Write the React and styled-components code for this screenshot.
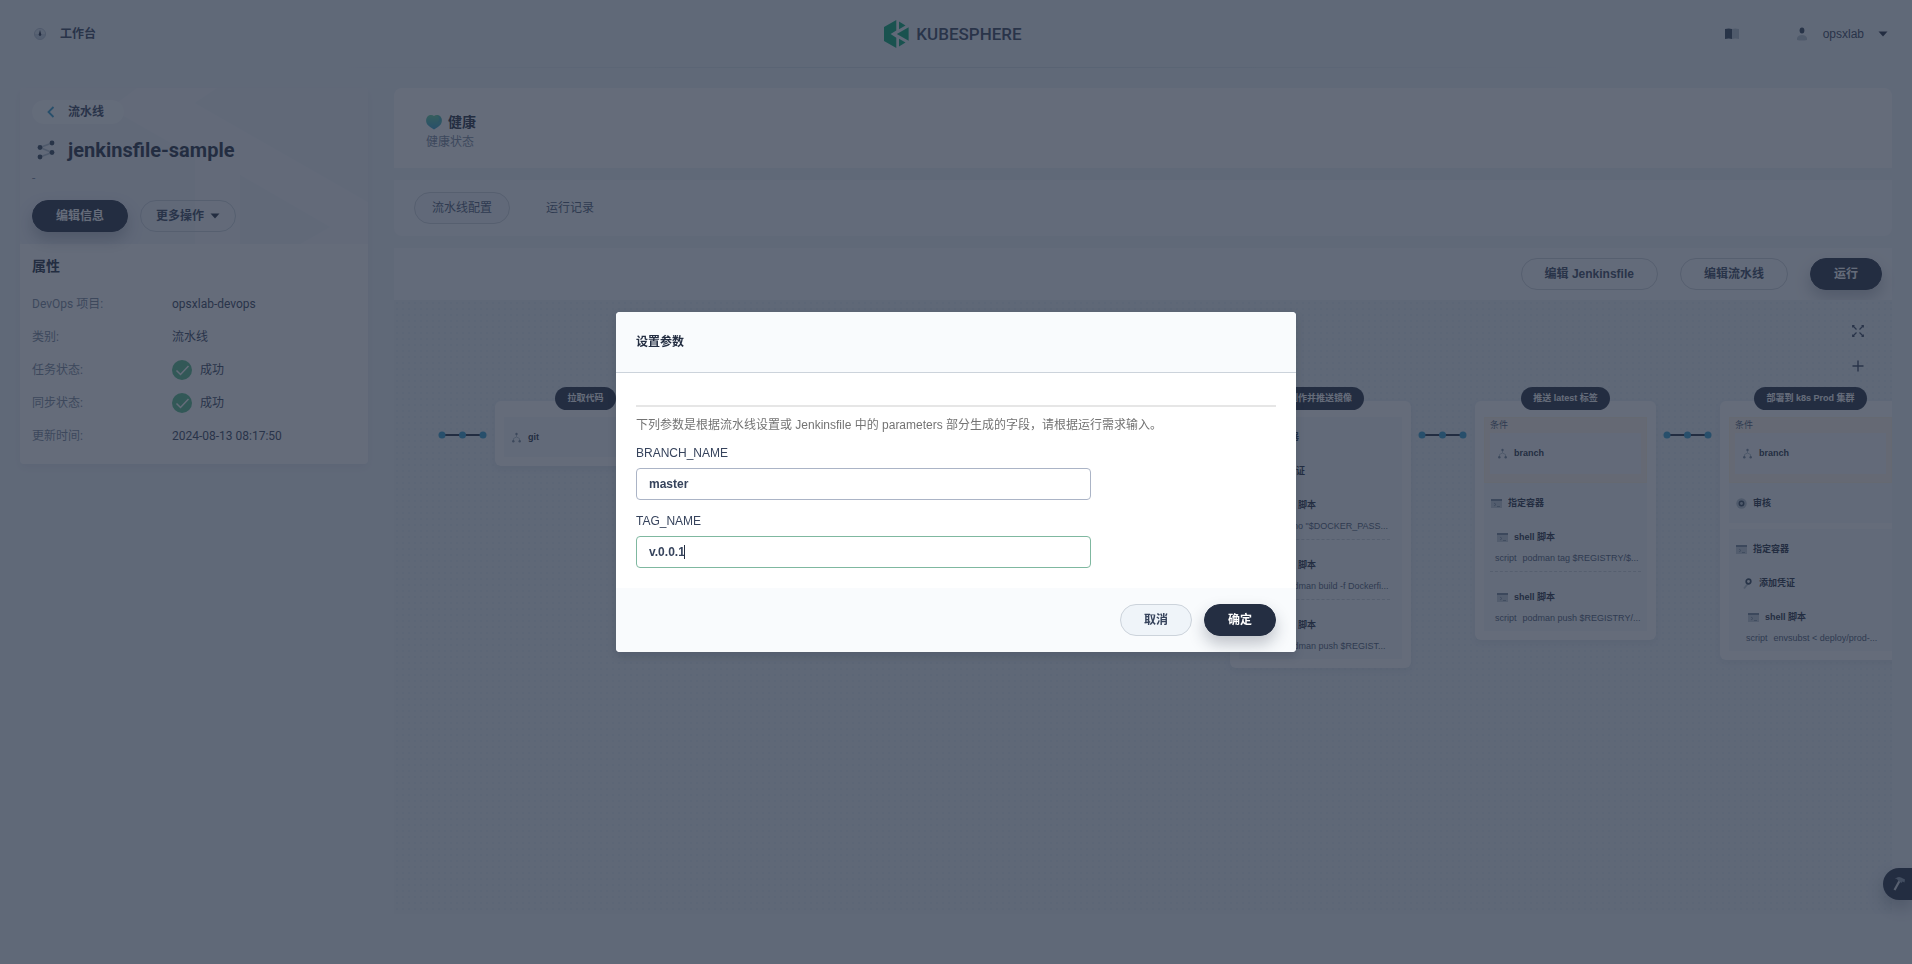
import React, { useState } from "react";
import styled, { createGlobalStyle, css } from "styled-components";

const GlobalStyle = createGlobalStyle`
  * {
    box-sizing: border-box;
  }
  body {
    margin: 0;
    background: #eff4f9;
    color: #36435c;
    font-family: "Liberation Sans", "Noto Sans CJK SC", sans-serif;
    font-size: 12px;
    line-height: 20px;
  }
  button, input {
    font-family: inherit;
    font-size: 12px;
  }
  h1, h2, h3, p, dl, dd, ul {
    margin: 0;
    padding: 0;
  }
`;

const Page = styled.div`
  min-height: 100vh;
  overflow: hidden;
`;

/* header */

const Header = styled.header`
  display: grid;
  grid-template-columns: 1fr auto 1fr;
  align-items: center;
  height: 68px;
  padding: 0 20px;
  border-bottom: 1px solid;
  border-image: linear-gradient(to right, transparent 16%, #d5e2e8 45%, #d5e2e8 55%, transparent 84%) 1;
`;

const HeaderButton = styled.button`
  display: flex;
  align-items: center;
  gap: 12px;
  padding: 0 12px;
  border: 0;
  background: none;
  color: #36435c;
  font-weight: ${(props) => (props.$strong ? 700 : 400)};
  line-height: 20px;
`;

const HeaderRight = styled.div`
  display: flex;
  justify-content: flex-end;
  align-items: center;
  gap: 39px;
`;

const UserButton = styled(HeaderButton)`
  gap: 14px;
  padding: 0 4px;
`;

const Brand = styled.a`
  display: flex;
  align-items: center;
  gap: 7px;
  padding-right: 6px;
  color: #36435c;
  font-family: Roboto, sans-serif;
  font-size: 17px;
  font-weight: 500;
  text-decoration: none;
`;

/* page frame */

const Content = styled.div`
  display: flex;
  align-items: flex-start;
  gap: 26px;
  padding: 20px 20px 0;
`;

const Aside = styled.aside`
  flex: 0 0 348px;
  border-radius: 4px;
  overflow: hidden;
  background: #fff;
  font-family: Roboto, "Noto Sans CJK SC", sans-serif;
  box-shadow: 0 4px 8px rgba(36, 46, 66, 0.06);
`;

const Main = styled.main`
  flex: 1;
  min-width: 0;
`;

const Intro = styled.div`
  position: relative;
  padding: 12px 12px 12px;
  background: #f7f9fb;
`;

const IntroArt = styled.svg`
  position: absolute;
  inset: 0;
  width: 100%;
  height: 100%;
`;

const IntroBody = styled.div`
  position: relative;
`;

const BackLink = styled.a`
  display: inline-flex;
  align-items: center;
  gap: 12px;
  height: 24px;
  padding: 0 20px 0 14px;
  border-radius: 12px;
  background: #fcfdfd;
  color: #36435c;
  font-weight: 700;
  text-decoration: none;
`;

const Title = styled.h1`
  display: flex;
  align-items: center;
  gap: 12px;
  margin-top: 12px;
  padding-left: 4px;
  color: #242e42;
  font-size: 20px;
  font-weight: 700;
  line-height: 28px;
`;

const Description = styled.p`
  margin-top: 4px;
  color: #79879c;
`;

const Actions = styled.div`
  display: flex;
  justify-content: ${(props) => (props.$end ? "flex-end" : "flex-start")};
  gap: ${(props) => props.$gap || 12}px;
`;

const IntroActions = styled(Actions)`
  margin-top: 12px;
`;

const Button = styled.button`
  display: inline-flex;
  align-items: center;
  justify-content: center;
  gap: 6px;
  height: 32px;
  padding: 0 ${(props) => (props.$menu ? 15 : 23)}px;
  border: 1px solid #ccd3db;
  border-radius: 16px;
  background: ${(props) => (props.$ghost ? "transparent" : "#eff4f9")};
  color: #36435c;
  font-weight: 700;
  line-height: 20px;
  white-space: nowrap;
  ${(props) =>
    props.$primary &&
    css`
      border-color: #242e42;
      background: #242e42;
      color: #fff;
      box-shadow: 0 8px 16px rgba(36, 46, 66, 0.28);
    `}
`;

const Attributes = styled.section`
  padding: 12px 12px 18px;
`;

const AttributesTitle = styled.h2`
  margin-bottom: 18px;
  color: #242e42;
  font-size: 14px;
  line-height: 20px;
`;

const AttributeList = styled.dl`
  display: grid;
  grid-template-columns: 140px 1fr;
  row-gap: 13px;
  line-height: 20px;

  dt {
    color: #79879c;
  }
  dd {
    display: flex;
    gap: 8px;
  }
`;

/* right column */

const StatusCard = styled.section`
  height: 80px;
  padding: 24px 32px 16px;
  border-radius: 8px 8px 0 0;
  background: #fff;
  color: #79879c;
`;

const StatusTitle = styled.h2`
  display: flex;
  align-items: center;
  gap: 6px;
  color: #242e42;
  font-size: 14px;
  line-height: 20px;
`;

const Tabs = styled.nav`
  display: flex;
  gap: 18px;
  margin-top: 12px;
  padding: 12px 20px;
  border-radius: 0 0 8px 8px;
  background: #f9fbfd;
`;

const Tab = styled.button`
  height: 32px;
  padding: 0 17px;
  border: 1px solid ${(props) => (props.$active ? "#ccd3db" : "transparent")};
  border-radius: 16px;
  background: ${(props) => (props.$active ? "#f2f6fa" : "transparent")};
  color: #4a5974;
  line-height: 20px;
`;

const Toolbar = styled(Actions)`
  margin-top: 12px;
  padding: 10px;
  background: #f9fbfd;
`;

const Canvas = styled.section`
  position: relative;
  min-height: calc(100vh - 350px);
  overflow: hidden;
  background-color: #e9f0f5;
  background-image: radial-gradient(#e2ebf1 1px, transparent 1px);
  background-size: 6px 6px;
`;

const CanvasTools = styled.div`
  position: absolute;
  top: 21px;
  right: 24px;
  display: grid;
  gap: 15px;
`;

const ToolButton = styled.button`
  display: grid;
  place-items: center;
  width: 20px;
  height: 20px;
  padding: 0;
  border: 0;
  background: none;
  color: #36435c;
`;

/* pipeline */

const Pipeline = styled.div`
  display: flex;
  align-items: flex-start;
  padding: 87px 0 0 37px;
`;

const Connector = styled.svg`
  flex: none;
  width: 64px;
  height: 8px;
  margin-top: 44px;
`;

const Stage = styled.div`
  display: flex;
  flex: none;
  flex-direction: column;
  align-items: center;
  width: 181px;
  font-size: 9px;
  line-height: 8px;
`;

const StageName = styled.h3`
  z-index: 1;
  height: 23px;
  margin-bottom: -9px;
  padding: 0 12px;
  border-radius: 12px;
  background: #242e42;
  color: #fff;
  font-size: 9px;
  line-height: 23px;
`;

const StageCard = styled.div`
  display: grid;
  gap: 6px;
  width: 100%;
  min-height: 65px;
  padding: 16px 9px 9px;
  border-radius: 6px;
  background: #fff;
  box-shadow: 0 3px 6px rgba(36, 46, 66, 0.06);
`;

const StepBox = styled.div`
  background: #f5f7fa;
`;

const Steps = styled.div`
  padding: 3px 0;
`;

const StepHead = styled.div`
  display: flex;
  align-items: center;
  gap: 6px;
  height: 34px;
  padding-left: 7px;
  color: #242e42;
  font-weight: 700;
`;

const Nested = styled.div`
  margin: 0 6px;
`;

const Step = styled.div`
  & + & {
    margin-top: 8px;
  }
  &:not(:last-child) {
    padding-bottom: 3px;
    border-bottom: 1px dashed #ccd3db;
  }
`;

const Script = styled.div`
  display: flex;
  gap: 6px;
  height: 14px;
  padding-left: 5px;
  color: #4a5974;
  white-space: nowrap;
`;

const Condition = styled.div`
  padding: 0 5px 8px;
  border: 1px solid #fdf3e2;
  background: #fdf6ea;
  color: #4a5974;
  line-height: 15px;
`;

const ConditionBody = styled.div`
  padding: 3px 0 4px;
  background: #f7f8fc;
`;

const ToolboxButton = styled.button`
  position: fixed;
  right: 0;
  bottom: 64px;
  display: flex;
  align-items: center;
  width: 29px;
  height: 32px;
  padding: 0 0 0 10px;
  border: 0;
  border-radius: 16px 0 0 16px;
  background: #242e42;
  box-shadow: 0 8px 16px rgba(36, 46, 66, 0.28);
`;

/* dialog */

const Mask = styled.div`
  position: fixed;
  inset: 0;
  z-index: 10;
  display: flex;
  align-items: center;
  justify-content: center;
  background: rgba(36, 46, 66, 0.7);
`;

const Dialog = styled.form`
  width: 680px;
  border-radius: 4px;
  overflow: hidden;
  background: #fff;
  box-shadow: 0 4px 8px rgba(36, 46, 66, 0.2);
`;

const DialogTitle = styled.h2`
  padding: 20px;
  border-bottom: 1px solid #ccd3db;
  background: #f9fbfd;
  color: #242e42;
  font-size: 12px;
  line-height: 20px;
`;

const DialogBody = styled.div`
  padding: 32px 20px 20px;
`;

const Hint = styled.p`
  margin-bottom: 8px;
  padding-top: 8px;
  border-top: 2px solid #e6e6e6;
  color: #737373;
`;

const Field = styled.div`
  position: relative;
  max-width: 455px;

  & + & {
    margin-top: 11px;
  }
`;

const Label = styled.label`
  display: block;
  margin-bottom: 5px;
`;

const Input = styled.input`
  display: block;
  width: 100%;
  height: 32px;
  padding: 0 12px;
  border: 1px solid ${(props) => (props.$active ? "#7fb8a0" : "#abb4c6")};
  border-radius: 4px;
  outline: 0;
  background: #fff;
  color: #36435c;
  font-weight: 700;
`;

const Caret = styled.span`
  position: absolute;
  bottom: 9px;
  left: 48px;
  width: 1px;
  height: 14px;
  background: #242e42;
`;

const DialogFooter = styled.footer`
  padding: 16px 20px;
  background: #f9fbfd;
`;

/* icons */

const DashboardIcon = () => (
  <svg width="16" height="16" viewBox="0 0 16 16">
    <circle cx="8" cy="8" r="5.5" fill="#c3d0dc" stroke="#b4c1cf" />
    <path d="M3 8a5 5 0 0 1 10 0z" fill="#dbe3ea" />
    <path d="M8 4l1.300 4.600a1.300 1.300 0 1 1-2.600 0z" fill="#242e42" />
  </svg>
);

const LogoIcon = () => (
  <svg width="25" height="28" viewBox="0 0 25 28">
    <g fill="#00a971">
      <path d="M12.300 0v10.500L6.600 14l5.700 3.800V28L0 21V7z" />
      <path d="M15 1.500l6.500 4L15 9.200z" />
      <path d="M24.600 7.300v13.400L12.800 14z" />
      <path d="M15 18.800l6.500 3.700-6.500 4z" />
    </g>
  </svg>
);

const BookIcon = () => (
  <svg width="16" height="14" viewBox="0 0 16 14">
    <path d="M1 2q4-1 7 0v10q-3-1-7 0z" fill="#324558" />
    <path d="M8 2q3-1 7 0v10q-4-1-7 0z" fill="#b6c2cd" />
  </svg>
);

const UserIcon = () => (
  <svg width="14" height="14" viewBox="0 0 14 14">
    <ellipse cx="7" cy="3.500" rx="2.400" ry="2.900" fill="#324558" />
    <path d="M2 13v-2q1-3 5-3t5 3v2q-5 1-10 0z" fill="#b6c2cd" />
  </svg>
);

const CaretDown = () => (
  <svg width="10" height="6" viewBox="0 0 10 6">
    <path d="M.5.500h9L5 5.500z" fill="#242e42" />
  </svg>
);

const BackIcon = () => (
  <svg width="10" height="12" viewBox="0 0 10 12">
    <path d="M7.500 1L2.500 6l5 5" fill="none" stroke="#329dce" strokeWidth="1.800" />
  </svg>
);

const PipelineIcon = () => (
  <svg width="20" height="20" viewBox="0 0 20 20">
    <path d="M4 7.500l12-4.500M4 7.500l12 5M4 17l12-4.500" stroke="#b6c2cd" strokeWidth="1.500" />
    <g fill="#324558">
      <circle cx="4" cy="7.500" r="2.400" />
      <circle cx="16" cy="3" r="2.400" />
      <circle cx="16" cy="12.500" r="2.400" />
      <circle cx="4" cy="17" r="2.400" />
    </g>
  </svg>
);

const CheckIcon = () => (
  <svg width="20" height="20" viewBox="0 0 20 20">
    <circle cx="10" cy="10" r="10" fill="#55bc8a" />
    <path d="M4.500 10.500l4 4 8-8.500" fill="none" stroke="#fff" strokeWidth="1.500" />
  </svg>
);

const HeartIcon = () => (
  <svg width="16" height="16" viewBox="0 0 16 16">
    <defs>
      <linearGradient id="heart" x1="0" y1="0" x2="0" y2="1">
        <stop offset="0" stopColor="#5fce9b" />
        <stop offset="1" stopColor="#329dce" />
      </linearGradient>
    </defs>
    <path d="M8 2C9.500.800 12.500.600 14.500 2.500c2 2.500 1.700 6 0 8.300Q12 13.500 8 15.500 4 13.500 1.500 10.800C-.2 8.500-.5 5 1.500 2.500 3.500.600 6.500.800 8 2z" fill="url(#heart)" />
    <path d="M10.500 1.500q3 1 2.500 4.500-.3 2-2 2.500 4-.5 4.500-3 0-3.500-5-4z" fill="#329dce" opacity=".5" />
  </svg>
);

const BranchIcon = () => (
  <svg width="11" height="11" viewBox="0 0 11 11">
    <path d="M5.500 2v3L2.500 6.500V9M5.500 5l3 1.500V9" fill="none" stroke="#b6c2cd" />
    <g fill="#77889a">
      <circle cx="5.500" cy="2" r="1.200" />
      <circle cx="2.300" cy="9.300" r="1.200" />
      <circle cx="8.700" cy="9.300" r="1.200" />
    </g>
  </svg>
);

const TerminalIcon = () => (
  <svg width="11" height="11" viewBox="0 0 11 11">
    <path d="M0 1h11v9H0z" fill="#c3ced8" />
    <path d="M0 1h11v2H0z" fill="#77889a" />
    <path d="M3 5l2 1.500L3 8M6 8.500h3" fill="none" stroke="#77889a" strokeWidth=".8" />
  </svg>
);

const ReviewIcon = () => (
  <svg width="11" height="11" viewBox="0 0 11 11">
    <circle cx="5.500" cy="5.500" r="5.200" fill="#b6c2cd" />
    <circle cx="5.500" cy="5.500" r="2.200" fill="none" stroke="#324558" strokeWidth="1.500" />
  </svg>
);

const KeyIcon = () => (
  <svg width="11" height="11" viewBox="0 0 11 11">
    <path d="M6 5.500L2 10.500" stroke="#b6c2cd" strokeWidth="1.800" />
    <circle cx="6.500" cy="3.500" r="2.300" fill="none" stroke="#324558" strokeWidth="1.700" />
  </svg>
);

const ExpandIcon = () => (
  <svg width="12" height="12" viewBox="0 0 12 12" fill="none" stroke="currentColor" strokeWidth="1.200">
    <path d="M4.500 4.500L1 1M7.500 4.500L11 1M4.500 7.500L1 11M7.500 7.500L11 11" />
    <path d="M.7 2.500V.700h1.800M9.500.700h1.800v1.800M.7 9.500v1.800h1.800M9.500 11.300h1.800V9.500" />
  </svg>
);

const PlusIcon = () => (
  <svg width="12" height="12" viewBox="0 0 12 12">
    <path d="M6 .500v11M.500 6h11" stroke="currentColor" strokeWidth="1.400" />
  </svg>
);

const HammerIcon = () => (
  <svg width="14" height="16" viewBox="0 0 14 16">
    <path d="M6.500 5L1.500 14" stroke="#d5dbe2" strokeWidth="2.200" />
    <path d="M2 3q3-3 6-1.500l4 2-.5 3-2-1-1 1.500-3-2q-1-2-3.500-3z" fill="#8a97a8" />
  </svg>
);

const stepIcons = {
  branch: BranchIcon,
  terminal: TerminalIcon,
  review: ReviewIcon,
  key: KeyIcon,
};

const shell = (script) => ({ icon: "terminal", name: "shell 脚本", script });

const stages = [
  { id: 1, name: "拉取代码", boxes: [{ steps: [{ icon: "branch", name: "git" }] }] },
  { id: 2, boxes: [] },
  { id: 3, boxes: [] },
  {
    id: 4,
    name: "制作并推送镜像",
    boxes: [
      {
        steps: [
          {
            icon: "terminal",
            name: "指定容器",
            children: [
              {
                icon: "key",
                name: "添加凭证",
                children: [
                  shell('echo "$DOCKER_PASS...'),
                  shell("podman build -f Dockerfi..."),
                  shell("podman push $REGIST..."),
                ],
              },
            ],
          },
        ],
      },
    ],
  },
  {
    id: 5,
    name: "推送 latest 标签",
    boxes: [
      {
        condition: "branch",
        steps: [
          {
            icon: "terminal",
            name: "指定容器",
            children: [shell("podman tag $REGISTRY/$..."), shell("podman push $REGISTRY/...")],
          },
        ],
      },
    ],
  },
  {
    id: 6,
    name: "部署到 k8s Prod 集群",
    boxes: [
      { condition: "branch", steps: [{ icon: "review", name: "审核" }] },
      {
        steps: [
          {
            icon: "terminal",
            name: "指定容器",
            children: [
              { icon: "key", name: "添加凭证", children: [shell("envsubst < deploy/prod-...")] },
            ],
          },
        ],
      },
    ],
  },
];

const PipelineStep = ({ step }) => {
  const Icon = stepIcons[step.icon];
  return (
    <Step>
      <StepHead>
        <Icon />
        {step.name}
      </StepHead>
      {step.script && (
        <Script>
          <span>script</span>
          <span>{step.script}</span>
        </Script>
      )}
      {step.children && (
        <Nested>
          {step.children.map((child, index) => (
            <PipelineStep key={index} step={child} />
          ))}
        </Nested>
      )}
    </Step>
  );
};

const StageNode = ({ stage }) => (
  <Stage>
    <StageName>{stage.name}</StageName>
    <StageCard>
      {stage.boxes.map((box, index) => (
        <StepBox key={index}>
          {box.condition && (
            <Condition>
              条件
              <ConditionBody>
                <StepHead>
                  <BranchIcon />
                  {box.condition}
                </StepHead>
              </ConditionBody>
            </Condition>
          )}
          <Steps>
            {box.steps.map((step) => (
              <PipelineStep key={step.name} step={step} />
            ))}
          </Steps>
        </StepBox>
      ))}
    </StageCard>
  </Stage>
);

const StageConnector = () => (
  <Connector viewBox="0 0 64 8">
    <path d="M11 4h41" stroke="#242e42" strokeWidth="2" />
    <g fill="#329dce">
      <circle cx="11" cy="4" r="3.500" />
      <circle cx="31.500" cy="4" r="3.500" />
      <circle cx="52" cy="4" r="3.500" />
    </g>
  </Connector>
);

const Sidebar = () => (
  <Aside>
    <Intro>
      <IntroArt viewBox="0 0 348 156" preserveAspectRatio="none" fill="#f0f3f9">
        <path d="M0 0h117L98 14v11l77 44v87H0z" />
        <path d="M197 0h151v114L175 15z" />
        <path d="M220 87l90 52-30 17h-60z" />
      </IntroArt>
      <IntroBody>
        <BackLink href="#pipelines">
          <BackIcon />
          流水线
        </BackLink>
        <Title>
          <PipelineIcon />
          jenkinsfile-sample
        </Title>
        <Description>-</Description>
        <IntroActions>
          <Button type="button" $primary>编辑信息</Button>
          <Button type="button" $ghost $menu>
            更多操作
            <CaretDown />
          </Button>
        </IntroActions>
      </IntroBody>
    </Intro>
    <Attributes>
      <AttributesTitle>属性</AttributesTitle>
      <AttributeList>
        <dt>DevOps 项目:</dt>
        <dd>opsxlab-devops</dd>
        <dt>类别:</dt>
        <dd>流水线</dd>
        <dt>任务状态:</dt>
        <dd><CheckIcon />成功</dd>
        <dt>同步状态:</dt>
        <dd><CheckIcon />成功</dd>
        <dt>更新时间:</dt>
        <dd>2024-08-13 08:17:50</dd>
      </AttributeList>
    </Attributes>
  </Aside>
);

const ParamsDialog = () => {
  const [params, setParams] = useState({ BRANCH_NAME: "master", TAG_NAME: "v.0.0.1" });

  const handleChange = (e) => {
    setParams({ ...params, [e.target.name]: e.target.value });
  };

  return (
    <Mask>
      <Dialog role="dialog" aria-labelledby="params-title" onSubmit={(e) => e.preventDefault()}>
        <DialogTitle id="params-title">设置参数</DialogTitle>
        <DialogBody>
          <Hint>
            下列参数是根据流水线设置或 Jenkinsfile 中的 parameters 部分生成的字段，请根据运行需求输入。
          </Hint>
          <Field>
            <Label htmlFor="branch-name">BRANCH_NAME</Label>
            <Input id="branch-name" name="BRANCH_NAME" value={params.BRANCH_NAME} onChange={handleChange} />
          </Field>
          <Field>
            <Label htmlFor="tag-name">TAG_NAME</Label>
            <Input id="tag-name" name="TAG_NAME" $active value={params.TAG_NAME} onChange={handleChange} />
            <Caret />
          </Field>
        </DialogBody>
        <DialogFooter>
          <Actions $end>
            <Button type="button">取消</Button>
            <Button type="submit" $primary>确定</Button>
          </Actions>
        </DialogFooter>
      </Dialog>
    </Mask>
  );
};

const App = () => {
  const [tab, setTab] = useState("config");

  return (
    <Page>
      <GlobalStyle />
      <Header>
        <HeaderButton type="button" $strong>
          <DashboardIcon />
          工作台
        </HeaderButton>
        <Brand href="#home">
          <LogoIcon />
          KUBESPHERE
        </Brand>
        <HeaderRight>
          <HeaderButton type="button" aria-label="Docs">
            <BookIcon />
          </HeaderButton>
          <UserButton type="button">
            <UserIcon />
            opsxlab
            <CaretDown />
          </UserButton>
        </HeaderRight>
      </Header>
      <Content>
        <Sidebar />
        <Main>
          <StatusCard>
            <StatusTitle>
              <HeartIcon />
              健康
            </StatusTitle>
            <p>健康状态</p>
          </StatusCard>
          <Tabs>
            <Tab type="button" $active={tab === "config"} onClick={() => setTab("config")}>
              流水线配置
            </Tab>
            <Tab type="button" $active={tab === "records"} onClick={() => setTab("records")}>
              运行记录
            </Tab>
          </Tabs>
          <Toolbar $end $gap={22}>
            <Button type="button" $ghost>编辑 Jenkinsfile</Button>
            <Button type="button" $ghost>编辑流水线</Button>
            <Button type="button" $primary>运行</Button>
          </Toolbar>
          <Canvas>
            <Pipeline>
              {stages.map((stage) => (
                <React.Fragment key={stage.id}>
                  <StageConnector />
                  <StageNode stage={stage} />
                </React.Fragment>
              ))}
            </Pipeline>
            <CanvasTools>
              <ToolButton type="button" aria-label="Fullscreen"><ExpandIcon /></ToolButton>
              <ToolButton type="button" aria-label="Zoom in"><PlusIcon /></ToolButton>
            </CanvasTools>
          </Canvas>
        </Main>
      </Content>
      <ToolboxButton type="button" aria-label="Toolbox">
        <HammerIcon />
      </ToolboxButton>
      <ParamsDialog />
    </Page>
  );
};

export default App;
